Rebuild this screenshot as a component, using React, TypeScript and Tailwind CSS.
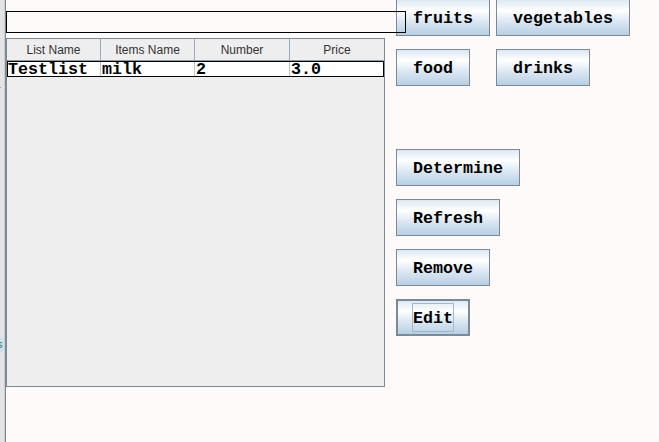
import React from 'react';

const mono = { fontFamily: '"Liberation Mono", "DejaVu Sans Mono", monospace' };

interface BtnProps {
  label: string;
  width: string;
  focused?: boolean;
}

function OceanButton({ label, width, focused }: BtnProps) {
  return (
    <button
      type="button"
      className={`${width} h-[37px] flex items-center justify-center text-black font-bold text-[16.67px] leading-none bg-[linear-gradient(to_bottom,#dde8f3_0%,#ffffff_30%,#dde8f3_60%,#b8cfe5_100%)] ${focused ? 'border-2' : 'border'} border-[#7a8a99]`}
      style={mono}
    >
      {focused ? (
        <span className="h-[29px] pt-[3px] flex items-center border border-[#a3b8cc]">{label}</span>
      ) : (
        <span className="pt-[3px]">{label}</span>
      )}
    </button>
  );
}

const columns = ['List Name', 'Items Name', 'Number', 'Price'];
const row = ['Testlist', 'milk', '2', '3.0'];

function App() {
  return (
    <div className="w-[659px] h-[442px] bg-[#fffafa] flex overflow-hidden">
      {/* edge of the window behind */}
      <div className="w-[5px] h-full bg-[#e4e4e4] border-r border-[#cdcdcd] flex flex-col overflow-hidden">
        <div className="mt-[84px] h-[10px] -ml-[3px] text-[11px] leading-[10px] text-[#2a4fd0]" style={{ fontFamily: '"Liberation Sans", sans-serif' }}>
          r
        </div>
        <div className="mt-[243px] h-[15px] bg-[#d3dfeb] -ml-[3px] text-[11px] leading-[15px] text-[#2a7a6a]" style={{ fontFamily: '"Liberation Sans", sans-serif' }}>
          s
        </div>
      </div>
      <div className="w-px h-full bg-[#7a8a99]" />

      {/* left column */}
      <div className="w-[390px] flex flex-col">
        <div className="relative z-10 mt-[11px] w-[400px] h-[22px] border border-black" />
        <div className="mt-[5px] w-[379px] h-[349px] border border-[#7a8a99] bg-[#eeeeee] flex flex-col">
          <div
            className="h-[22px] grid grid-cols-[94px_94px_95px_94px] border-b border-[#8a99a8] text-[12px] text-[#333333]"
            style={{ fontFamily: '"Liberation Sans", Arial, sans-serif' }}
          >
            {columns.map((c, i) => (
              <div
                key={c}
                className={`flex items-center justify-center ${i < 3 ? 'border-r border-[#9aa9b8]' : ''}`}
              >
                {c}
              </div>
            ))}
          </div>
          <div className="h-[16px] border border-black bg-white grid grid-cols-[93px_94px_95px_93px] font-bold text-[16.67px] leading-[15px] text-black" style={mono}>
            {row.map((v, i) => (
              <div
                key={i}
                className={`overflow-hidden whitespace-nowrap ${i > 0 ? 'pl-px' : ''} ${i < 3 ? 'border-r border-[#b8c4d0]' : ''}`}
              >
                {v}
              </div>
            ))}
          </div>
        </div>
      </div>

      {/* right column */}
      <div className="flex flex-col -mt-px">
        <div className="grid grid-cols-[100px_auto] gap-y-[13px]">
          <OceanButton label="fruits" width="w-[94px]" />
          <OceanButton label="vegetables" width="w-[134px]" />
          <OceanButton label="food" width="w-[74px]" />
          <OceanButton label="drinks" width="w-[94px]" />
        </div>
        <div className="mt-[63px] flex flex-col gap-[13px]">
          <OceanButton label="Determine" width="w-[124px]" />
          <OceanButton label="Refresh" width="w-[104px]" />
          <OceanButton label="Remove" width="w-[94px]" />
          <OceanButton label="Edit" width="w-[74px]" focused />
        </div>
      </div>
    </div>
  );
}

export default App;
